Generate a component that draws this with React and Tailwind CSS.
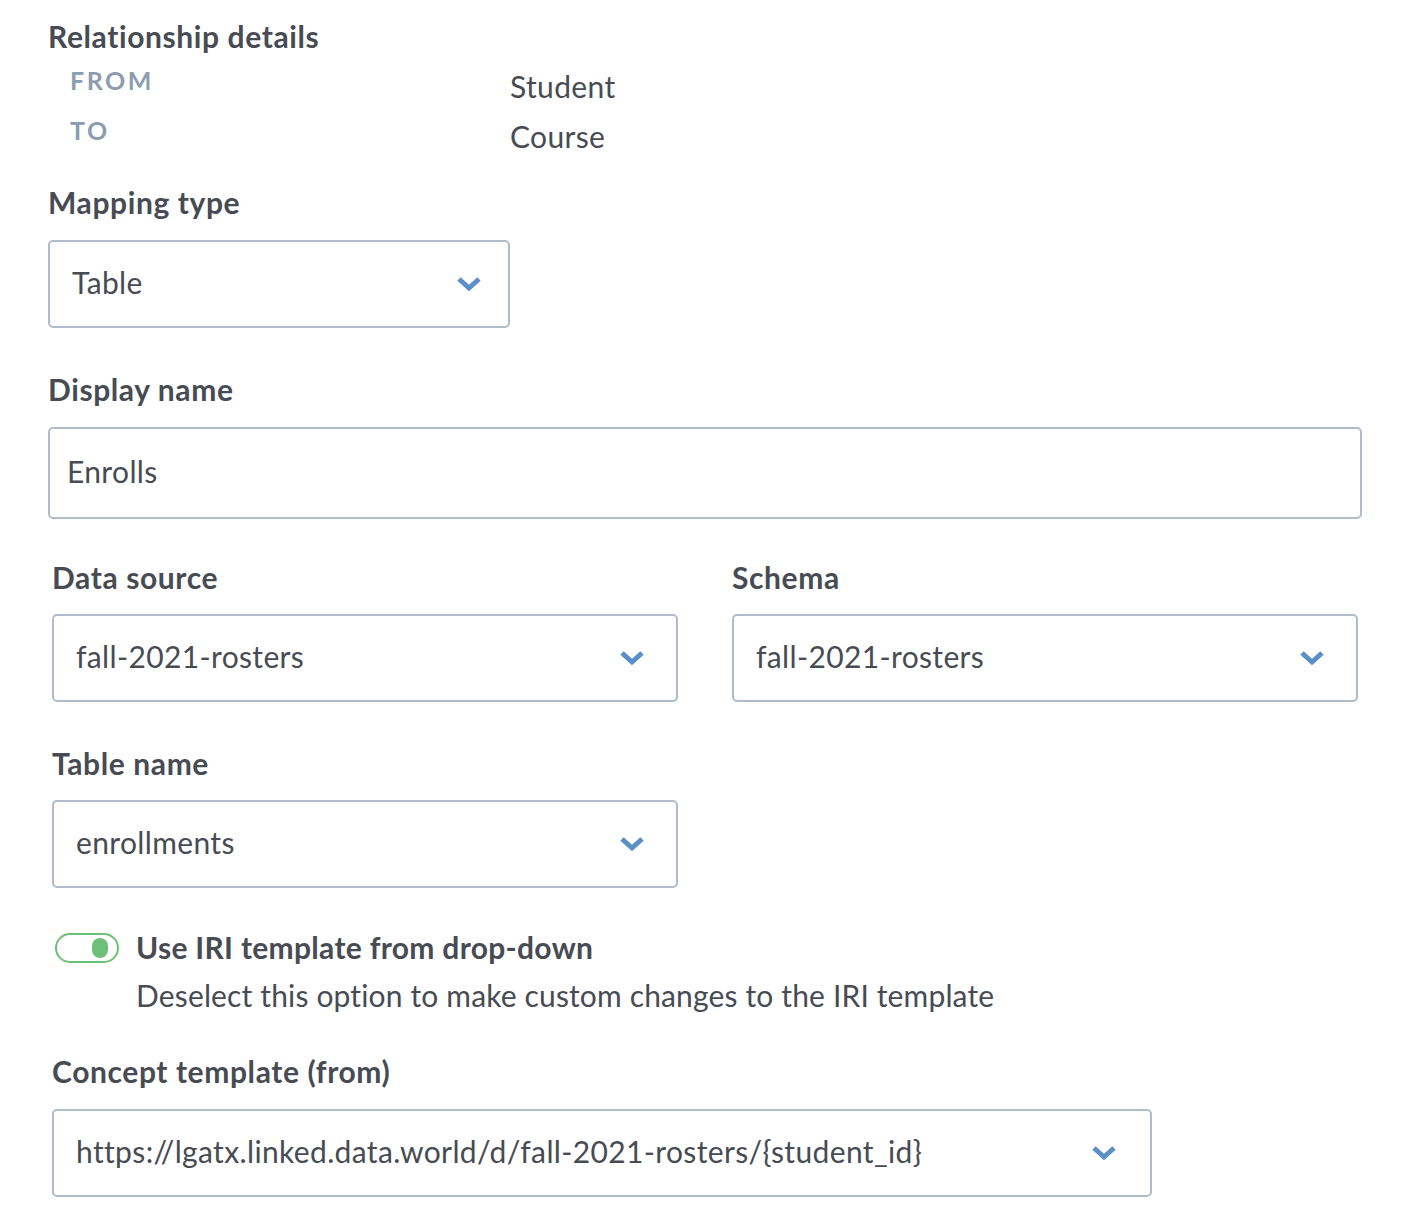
const font = { fontFamily: "Lato, 'Open Sans', sans-serif" };

function Chevron() {
  return (
    <svg width="26" height="16" viewBox="0 0 26 16" className="shrink-0">
      <polyline points="3,3 13,12 23,3" fill="none" stroke="#5b8fc8" strokeWidth="5" strokeLinejoin="miter" />
    </svg>
  );
}

function Select({ value, className = "" }) {
  return (
    <div className={`flex items-center justify-between h-[88px] border-2 border-[#b0bccb] rounded-[5px] pl-[22px] bg-white ${className}`}>
      <span className="pb-[4px] text-[30px] tracking-[0.012em] text-[#474b54]">{value}</span>
      <Chevron />
    </div>
  );
}

function Label({ children, className = "" }) {
  return <div className={`text-[30px] leading-[34px] tracking-[0.02em] font-bold text-[#474b54] ${className}`}>{children}</div>;
}

export default function App() {
  return (
    <div className="bg-white w-[1420px] h-[1214px] pt-[19px] pl-[48px]" style={font}>
      <Label>Relationship details</Label>
      <div className="mt-[8px]">
        <div className="flex items-center h-[50px]">
          <div className="w-[462px] pl-[22px] pb-[10px] text-[25px] font-bold tracking-[0.1em] text-[#8c9cb0]">FROM</div>
          <div className="text-[30px] tracking-[0.012em] text-[#474b54]">Student</div>
        </div>
        <div className="flex items-center h-[50px]">
          <div className="w-[462px] pl-[22px] pb-[10px] text-[25px] font-bold tracking-[0.1em] text-[#8c9cb0]">TO</div>
          <div className="text-[30px] tracking-[0.012em] text-[#474b54]">Course</div>
        </div>
      </div>

      <Label className="mt-[24px]">Mapping type</Label>
      <Select value="Table" className="mt-[21px] w-[462px] h-[87px] pr-[26px]" />

      <Label className="mt-[44px]">Display name</Label>
      <div className="mt-[21px] w-[1314px] h-[92px] border-2 border-[#b0bccb] rounded-[5px] flex items-center pl-[17px]">
        <span className="pb-[3px] text-[30px] tracking-[0.012em] text-[#474b54]">Enrolls</span>
      </div>

      <div className="pl-[4px]">
        <div className="flex gap-[54px] mt-[41px]">
          <div className="w-[626px]">
            <Label>Data source</Label>
            <Select value="fall-2021-rosters" className="mt-[20px] pr-[31px]" />
          </div>
          <div className="w-[626px]">
            <Label>Schema</Label>
            <Select value="fall-2021-rosters" className="mt-[20px] pr-[31px]" />
          </div>
        </div>

        <Label className="mt-[44px]">Table name</Label>
        <Select value="enrollments" className="mt-[20px] w-[626px] pr-[31px]" />

        <div className="mt-[42px] flex items-start">
          <div className="mt-[3px] ml-[3px] w-[64px] h-[30px] rounded-full border-2 border-[#6cc077] bg-white flex items-center justify-end pr-[9px]">
            <div className="w-[16px] h-[20px] rounded-full bg-[#6cc077]" />
          </div>
          <div className="ml-[17px]">
            <div className="text-[30px] leading-[34px] tracking-[0.01em] font-bold text-[#474b54]">Use IRI template from drop-down</div>
            <div className="mt-[14px] text-[30px] leading-[34px] tracking-[0.005em] text-[#474b54]">Deselect this option to make custom changes to the IRI template</div>
          </div>
        </div>

        <Label className="mt-[42px]">Concept template (from)</Label>
        <Select value="https://lgatx.linked.data.world/d/fall-2021-rosters/{student_id}" className="mt-[21px] w-[1100px] pr-[33px]" />
      </div>
    </div>
  );
}
